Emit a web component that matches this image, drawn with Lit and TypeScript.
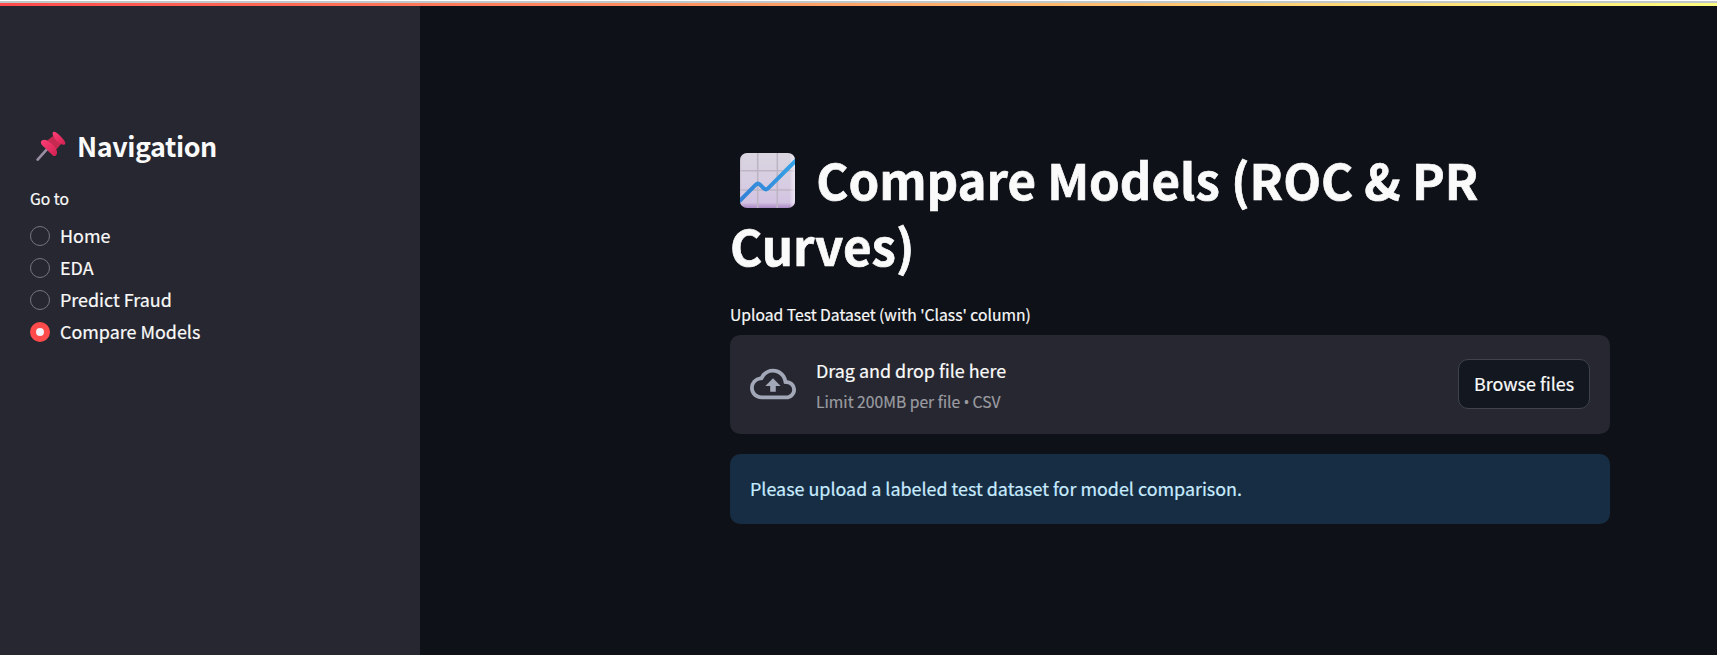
import { LitElement, html, css, svg } from "lit";
import { customElement, property, state } from "lit/decorators.js";

const pushpin = svg`
  <defs>
    <linearGradient id="pin" x1="0" y1="0" x2="1" y2="1">
      <stop offset="0" stop-color="#ff3f78"></stop><stop offset="1" stop-color="#d02150"></stop>
    </linearGradient>
  </defs>
  <path d="M1.6 28.6 L10.6 18.6" stroke="#998ea4" stroke-width="2.6" stroke-linecap="round"></path>
  <path d="M10 10.5 L17 5 L25 13 L19 20 Z" fill="#c62a50"></path>
  <path d="M5.8 9.6 C8.2 7.2 12.6 9.6 16.6 13.6 C20.6 17.8 22.4 22 20 24.4 C18.6 25.8 17 24.8 15.8 23.4 L6.4 14.6 C4.6 12.8 4.4 11 5.8 9.6 Z" fill="url(#pin)"></path>
  <path d="M17 1.2 C18.2 -0.2 21.4 2.2 24.8 5.4 C28 8.8 30.4 11.8 29 13.2 C27.8 14.4 24.6 13.6 21 10.2 C17.4 6.8 15.8 2.6 17 1.2 Z" fill="url(#pin)"></path>`;

const chart = svg`
  <defs>
    <linearGradient id="paper" x1="0" y1="0" x2="0" y2="1">
      <stop offset="0" stop-color="#d9d5df"></stop><stop offset="0.55" stop-color="#d7cde2"></stop>
      <stop offset="0.9" stop-color="#d3c3e2"></stop><stop offset="1" stop-color="#a988c4"></stop>
    </linearGradient>
    <linearGradient id="edge" x1="0" y1="0" x2="1" y2="0">
      <stop offset="0" stop-color="#b9a9c6" stop-opacity="0.6"></stop><stop offset="0.05" stop-color="#ddd" stop-opacity="0"></stop>
      <stop offset="0.9" stop-color="#fff" stop-opacity="0"></stop><stop offset="1" stop-color="#f2e8f6" stop-opacity="0.8"></stop>
    </linearGradient>
    <linearGradient id="trend" x1="0" y1="1" x2="1" y2="0">
      <stop offset="0" stop-color="#337fd4"></stop><stop offset="1" stop-color="#34a5e8"></stop>
    </linearGradient>
    <clipPath id="card"><rect width="55" height="55" rx="7"></rect></clipPath>
  </defs>
  <g clip-path="url(#card)">
    <rect width="55" height="55" fill="url(#paper)"></rect>
    <path d="M17.7 0V55M37.3 0V55M0 17.7H55M0 37H55" stroke="#bdb5c4" stroke-width="1.6"></path>
    <rect width="55" height="55" fill="url(#edge)"></rect>
    <path d="M-1 48.5 L15.6 31.8 Q17.8 29.6 20 31.6 L24 35.6 Q26 37.4 28 35.4 L57 6.4" fill="none" stroke="url(#trend)" stroke-width="4"></path>
  </g>`;

@customElement("nav-radio")
class NavRadio extends LitElement {
  @property() label = "";
  @property({ type: Boolean }) checked = false;

  static styles = css`
    :host { display: flex; align-items: center; gap: 10px; height: 32px; cursor: pointer; }
    .dot { box-sizing: border-box; width: 20px; height: 20px; border-radius: 50%; border: 1px solid #74757d; flex: none; }
    .dot.on { border: 6px solid #ff4b4b; background: #f3f3f8; }
    .text { height: 32px; line-height: 30px; -webkit-text-stroke: 0.2px; }
  `;

  render() {
    return html`<span class="dot ${this.checked ? "on" : ""}"></span><span class="text">${this.label}</span>`;
  }
}

@customElement("app-root")
class AppRoot extends LitElement {
  @state() page = "Compare Models";
  pages = ["Home", "EDA", "Predict Fraud", "Compare Models"];

  static styles = css`
    :host {
      display: flex; flex-direction: column; height: 100vh; overflow: hidden;
      background: #0e1117; color: #fafafa;
      font-family: "Noto Sans CJK SC", "Noto Sans", sans-serif; font-size: 17.92px;
    }
    * { box-sizing: border-box; margin: 0; }
    .top { height: 3px; flex: none; background: #bfc7c9; border-top: 1px solid #fff; }
    .stripe { height: 3px; flex: none; background: linear-gradient(90deg, #ff4b4b, #fffd80); }
    .body { flex: 1; display: flex; min-height: 0; }
    aside { width: 420px; background: #262730; padding: 122px 30px 0; flex: none; }
    h2 { display: flex; align-items: center; height: 36px; line-height: 36px; font-size: 26.9px; font-weight: 700; letter-spacing: -0.42px; }
    .pin { width: 30px; height: 30px; margin: 0 11.5px 0 5.5px; }
    .small { font-size: 15.68px; height: 24px; line-height: 24px; -webkit-text-stroke: 0.2px; }
    .goto { margin-top: 23px; margin-bottom: 9px; }
    main { flex: 1; padding: 140px 107px 0 310px; }
    h1 { font-size: 49.2px; line-height: 66px; font-weight: 700; -webkit-text-stroke: 0.7px; letter-spacing: -0.02px; }
    .chart { width: 55px; height: 55px; margin: 0 21.2px 0 10px; vertical-align: -8px; }
    .label { margin-top: 25px; margin-bottom: 8px; }
    .drop { display: flex; align-items: center; height: 99px; padding: 0 20px 1px; border-radius: 10px; background: #262730; }
    .cloud { width: 46px; height: 46px; fill: #a3a8b8; margin-right: 20px; }
    .hint { flex: 1; }
    .line { height: 30px; line-height: 30px; -webkit-text-stroke: 0.2px; }
    .muted { height: 24px; line-height: 24px; margin-top: 5px; color: #9b9ca1; }
    .bullet { font-family: "Open Sans", sans-serif; margin: 0 -0.3px; }
    button {
      width: 132px; height: 50px; padding: 0 0 1px; border: 1px solid #41434b; border-radius: 10px;
      background: #131720; color: inherit; font: inherit; line-height: 47px; -webkit-text-stroke: 0.2px;
    }
    .info { margin-top: 20px; height: 70px; line-height: 68px; padding: 0 20px; border-radius: 10px; background: #172d43; color: #c7ebff; -webkit-text-stroke: 0.2px; }
  `;

  render() {
    return html`
      <div class="top"></div>
      <div class="stripe"></div>
      <div class="body">
        <aside>
          <h2><svg class="pin" viewBox="0 0 30 30" fill="none">${pushpin}</svg><span>Navigation</span></h2>
          <div class="small goto">Go to</div>
          ${this.pages.map((p) => html`<nav-radio .label=${p} .checked=${p === this.page} @click=${() => (this.page = p)}></nav-radio>`)}
        </aside>
        <main>
          <h1><svg class="chart" viewBox="0 0 55 55">${chart}</svg><span>Compare Models (ROC &amp; PR Curves)</span></h1>
          <div class="small label">Upload Test Dataset (with 'Class' column)</div>
          <section class="drop">
            <svg class="cloud" viewBox="0 0 24 24"><path d="M19.35 10.04A7.49 7.49 0 0012 4C9.11 4 6.6 5.64 5.35 8.04A5.994 5.994 0 000 14c0 3.31 2.69 6 6 6h13c2.76 0 5-2.24 5-5 0-2.64-2.05-4.78-4.65-4.96zM19 18H6c-2.21 0-4-1.79-4-4 0-2.05 1.53-3.76 3.56-3.97l1.07-.11.5-.95A5.469 5.469 0 0112 6c2.62 0 4.88 1.86 5.39 4.43l.3 1.5 1.53.11A2.98 2.98 0 0122 15c0 1.65-1.35 3-3 3zM8 13h2.55v3h2.9v-3H16l-4-4-4 4z"></path></svg>
            <div class="hint">
              <div class="line">Drag and drop file here</div>
              <div class="small muted">Limit 200MB per file <span class="bullet">•</span> CSV</div>
            </div>
            <button>Browse files</button>
          </section>
          <div class="info">Please upload a labeled test dataset for model comparison.</div>
        </main>
      </div>`;
  }
}
